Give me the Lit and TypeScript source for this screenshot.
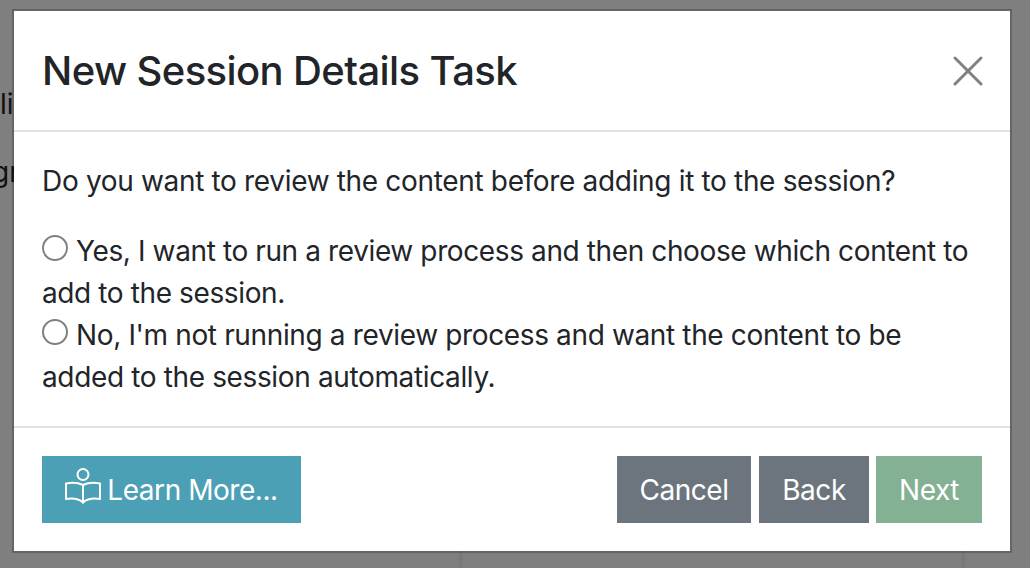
import { LitElement, html, css } from "lit";
import { customElement } from "lit/decorators.js";

@customElement("app-root")
export class AppRoot extends LitElement {
  static styles = css`
    :host {
      display: block;
      position: relative;
      width: 1030px;
      height: 568px;
      overflow: hidden;
      background: #fff;
      font-family: Inter, "Liberation Sans", sans-serif;
      color: #212529;
    }
    .page {
      height: 100%;
      box-sizing: border-box;
      font-size: 28px;
      line-height: 42px;
    }
    .page-text {
      margin: 0;
      padding-top: 83px;
      white-space: nowrap;
    }
    .page-line {
      display: block;
      margin-bottom: 26px;
    }
    .page-line.cut {
      margin-left: -8px;
    }
    .page-card {
      position: absolute;
      left: 462px;
      top: 551px;
      width: 500px;
      height: 40px;
      box-sizing: border-box;
      background: #fff;
      box-shadow: 0 0 5px rgba(0, 0, 0, 0.2);
    }
    .backdrop {
      position: absolute;
      inset: 0;
      background: rgba(0, 0, 0, 0.5);
      padding: 9px 18px 15px 12px;
      box-sizing: border-box;
    }
    .modal {
      display: flex;
      flex-direction: column;
      height: 544px;
      box-sizing: border-box;
      background: #fff;
      border: 2px solid rgba(0, 0, 0, 0.2);
      background-clip: padding-box;
    }
    .header {
      display: flex;
      align-items: center;
      justify-content: space-between;
      height: 121px;
      box-sizing: border-box;
      padding: 0 27px 0 28px;
      border-bottom: 2px solid #dee2e6;
      flex: none;
    }
    .title {
      margin: 0;
      font-size: 40px;
      font-weight: 500;
      line-height: 60px;
      letter-spacing: -0.6px;
    }
    .close {
      display: block;
      width: 30px;
      height: 30px;
    }
    .body {
      flex: 1;
      box-sizing: border-box;
      padding: 28px 28px 0;
      font-size: 28px;
      line-height: 42px;
      letter-spacing: -0.36px;
      border-bottom: 2px solid #dee2e6;
    }
    .question {
      margin: 0 0 28px;
      letter-spacing: -0.33px;
    }
    .option {
      display: block;
    }
    .option.yes {
      letter-spacing: -0.385px;
    }
    .radio {
      display: inline-block;
      box-sizing: border-box;
      width: 26px;
      height: 26px;
      border: 2px solid #808080;
      border-radius: 50%;
      background: #fff;
      margin: 0 8px 0 0;
      vertical-align: 0;
    }
    .footer {
      display: flex;
      align-items: center;
      height: 123px;
      flex: none;
      box-sizing: border-box;
      padding: 0 28px;
    }
    .spacer { flex: 1; }
    .btn {
      display: inline-flex;
      align-items: center;
      justify-content: center;
      height: 67px;
      box-sizing: border-box;
      padding-top: 1px;
      color: #fff;
      font-size: 28px;
      line-height: 42px;
      letter-spacing: -0.45px;
    }
    .learn { background: #4ca0b6; width: 259px; gap: 6px; }
    .book { display: block; width: 36px; height: 36px; margin-top: -9px; }
    .gray { background: #6c757d; }
    .cancel { width: 134px; margin-right: 8px; }
    .back { width: 110px; margin-right: 7px; }
    .next { background: #84b093; width: 106px; }
  `;

  render() {
    return html`
      <div class="page">
        <p class="page-text">
          <span class="page-line">li</span>
          <span class="page-line cut">gr</span>
        </p>
        <div class="page-card"></div>
      </div>
      <div class="backdrop">
        <div class="modal">
          <div class="header">
            <h1 class="title">New Session Details Task</h1>
            <svg class="close" viewBox="0 0 30 30" fill="none" stroke="#808080" stroke-width="3" stroke-linecap="round">
              <path d="M2 2 L28 28 M28 2 L2 28" />
            </svg>
          </div>
          <div class="body">
            <p class="question">Do you want to review the content before adding it to the session?</p>
            <label class="option yes"><span class="radio"></span>Yes, I want to run a review process and then choose which content to add to the session.</label>
            <label class="option"><span class="radio"></span>No, I'm not running a review process and want the content to be added to the session automatically.</label>
          </div>
          <div class="footer">
            <div class="btn learn">
              <svg class="book" viewBox="0 0 36 36" fill="none" stroke="#fff" stroke-width="2" stroke-linejoin="round" stroke-linecap="round">
                <circle cx="18" cy="6.5" r="5.5" />
                <path d="M18 17 C14 15 8 14 1 15.5 V31 C8 30 14 31 18 34.5 C22 31 28 30 35 31 V15.5 C28 14 22 15 18 17 Z" />
                <path d="M18 17 V34.5" />
              </svg>
              <span>Learn More...</span>
            </div>
            <div class="spacer"></div>
            <div class="btn gray cancel">Cancel</div>
            <div class="btn gray back">Back</div>
            <div class="btn next">Next</div>
          </div>
        </div>
      </div>
    `;
  }
}
